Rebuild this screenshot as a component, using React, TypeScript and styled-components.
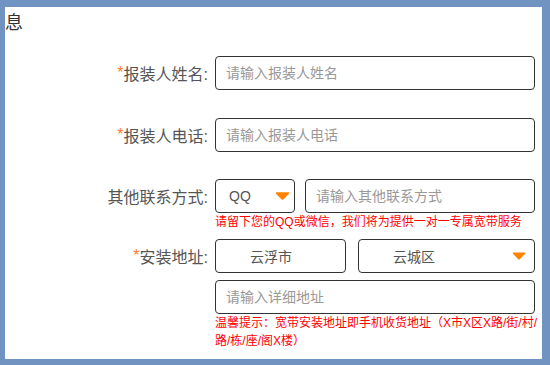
import React from 'react';
import styled, { createGlobalStyle } from 'styled-components';

const GlobalStyle = createGlobalStyle`
    html, body {
        margin: 0;
        padding: 0;
        background: #7193c1;
    }
    body {
        font-family: "Liberation Sans", "Noto Sans CJK SC", sans-serif;
    }
`

const Panel = styled.div`
    margin: 7px 8px 0 5px;
    height: 352px;
    background: #fff;
    padding-top: 2px;
    box-sizing: border-box;
    overflow: hidden;
`

const Title = styled.div`
    font-size: 18px;
    line-height: 24px;
    color: #333;
    font-family: "Noto Sans CJK SC", sans-serif;
`

const Row = styled.div<{ $top: number }>`
    display: grid;
    grid-template-columns: 203px 1fr;
    column-gap: 7px;
    margin-top: ${p => p.$top}px;
`

const Label = styled.label`
    height: 34px;
    display: flex;
    align-items: center;
    justify-content: flex-end;
    font-size: 16px;
    color: #555;
`

const Star = styled.span`
    color: #ff7a2a;
    font-family: "Liberation Sans", sans-serif;
`

const Controls = styled.div`
    display: flex;
    flex-direction: column;
    gap: 7px;
`

const Line = styled.div<{ $gap?: number }>`
    display: flex;
    gap: ${p => p.$gap ?? 10}px;
    width: 320px;
`

const Input = styled.input<{ $w?: number }>`
    box-sizing: border-box;
    width: ${p => (p.$w ? `${p.$w}px` : '320px')};
    height: 34px;
    border: 1px solid #333;
    border-radius: 4px;
    padding: 0 10px;
    font-size: 14px;
    font-family: "Liberation Sans", "Noto Sans CJK SC", sans-serif;
    color: #555;
    outline: none;
    &::placeholder {
        color: #999;
    }
`

const Select = styled.div<{ $w: number; $pad: number }>`
    box-sizing: border-box;
    width: ${p => p.$w}px;
    height: 34px;
    border: 1px solid #333;
    border-radius: 4px;
    padding-left: ${p => p.$pad}px;
    display: flex;
    align-items: center;
    position: relative;
    font-size: 14px;
    color: #555;
`

const Arrow = styled.svg<{ $right: number }>`
    position: absolute;
    right: ${p => p.$right}px;
    top: 50%;
    transform: translateY(-50%);
`

const Help = styled.div`
    color: #f00;
    font-size: 12px;
    line-height: 18px;
    margin-top: -7px;
`

const Caret = ({ right, w, h }: { right: number; w: number; h: number }) => (
    <Arrow $right={right} width={w} height={h} viewBox="0 0 14 8">
        <path d="M1.5 0.5 H12.5 Q14 0.5 13 1.8 L8 7 Q7 8 6 7 L1 1.8 Q0 0.5 1.5 0.5 Z" fill="#ff8200" />
    </Arrow>
)

const App: React.FC = () => {
    return (
        <>
            <GlobalStyle />
            <Panel>
                <Title>息</Title>

                <Row $top={23}>
                    <Label><Star>*</Star>报装人姓名:</Label>
                    <Controls>
                        <Input placeholder="请输入报装人姓名" />
                    </Controls>
                </Row>

                <Row $top={28}>
                    <Label><Star>*</Star>报装人电话:</Label>
                    <Controls>
                        <Input placeholder="请输入报装人电话" />
                    </Controls>
                </Row>

                <Row $top={27}>
                    <Label>其他联系方式:</Label>
                    <Controls>
                        <Line>
                            <Select $w={80} $pad={13}>
                                QQ
                                <Caret right={4} w={15} h={9} />
                            </Select>
                            <Input $w={230} placeholder="请输入其他联系方式" />
                        </Line>
                        <Help>请留下您的QQ或微信，我们将为提供一对一专属宽带服务</Help>
                    </Controls>
                </Row>

                <Row $top={8}>
                    <Label><Star>*</Star>安装地址:</Label>
                    <Controls>
                        <Line $gap={12}>
                            <Select $w={131} $pad={34}>云浮市</Select>
                            <Select $w={177} $pad={34}>
                                云城区
                                <Caret right={8} w={14} h={8} />
                            </Select>
                        </Line>
                        <Input placeholder="请输入详细地址" />
                        <Help>温馨提示：宽带安装地址即手机收货地址（X市X区X路/街/村/路/栋/座/阁X楼）</Help>
                    </Controls>
                </Row>
            </Panel>
        </>
    )
}

export default App;
